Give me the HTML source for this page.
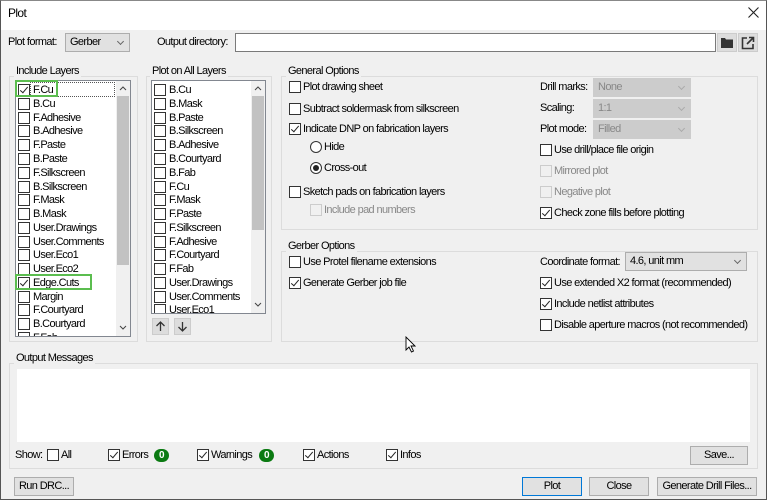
<!DOCTYPE html>
<html><head><meta charset="utf-8"><style>
*{box-sizing:border-box;margin:0;padding:0}
body{width:767px;height:500px;background:#f0f0f0;font-family:"Liberation Sans",sans-serif;font-size:11px;letter-spacing:-0.62px;color:#000;position:relative;overflow:hidden}
.a{position:absolute;white-space:nowrap}
.t{position:absolute;white-space:nowrap;line-height:13px}
.g{position:absolute;border:1px solid #dcdcdc}
.gt{position:absolute;background:#f0f0f0;padding:0 2px;line-height:12px;white-space:nowrap}
.cb{position:absolute;width:12px;height:12px;border:1px solid #333;background:#fff}
.cb.d{border-color:#ccc;background:#f0f0f0}
.ck::after{content:"";position:absolute;left:3px;top:0px;width:3px;height:7px;border:solid #222;border-width:0 1.3px 1.3px 0;transform:rotate(40deg)}
.rb{position:absolute;width:12px;height:12px;border:1px solid #333;border-radius:50%;background:#fff}
.rb.on::after{content:"";position:absolute;left:2px;top:2px;width:6px;height:6px;border-radius:50%;background:#222}
.cmb{position:absolute;height:19px;border:1px solid #adadad;background:#e1e1e1;line-height:17px;padding-left:4px}
.cmb.dis{background:#ccc;border-color:#ccc;color:#888}
.cmb::after{content:"";position:absolute;right:6px;top:5px;width:4px;height:4px;border:solid #666;border-width:0 1px 1px 0;transform:rotate(45deg)}
.cmb.dis::after{border-color:#aaa}
.btn{position:absolute;height:19px;border:1px solid #adadad;background:#e1e1e1;text-align:center;line-height:17px}
.list{position:absolute;background:#fff;border:1px solid #828790;overflow:hidden}
.li{position:absolute;left:2px;height:14px;line-height:14px}
.li .cb{left:0;top:1px}
.li span{position:absolute;left:15px;top:0}
.sb{position:absolute;width:14px;background:#f0f0f0}
.th{position:absolute;left:1px;width:12px;background:#c2c2c2}
.badge{position:absolute;width:15px;height:13px;border-radius:7px;background:#0b7a12;color:#fff;font-weight:bold;text-align:center;line-height:13px;font-size:10px}
</style></head><body>
<div class="a" style="left:0;top:0;width:767px;height:30px;background:#fff"></div>
<div class="a" style="left:8px;top:6px;font-size:12px">Plot</div>
<svg class="a" style="left:748px;top:7px" width="11" height="11"><path d="M0.5 0.5L10.5 10.5M10.5 0.5L0.5 10.5" stroke="#222" stroke-width="1.1"/></svg>
<div class="a" style="left:0;top:0;width:767px;height:500px;border:1px solid #555;border-top-color:#888"></div>

<div class="t" style="left:8px;top:36px">Plot format:</div>
<div class="cmb" style="left:65px;top:33px;width:65px">Gerber</div>
<div class="t" style="left:157px;top:36px">Output directory:</div>
<div class="a" style="left:235px;top:33px;width:481px;height:19px;background:#fff;border:1px solid #7a7a7a"></div>
<div class="a" style="left:717px;top:33px;width:20px;height:19px;background:#ddd;border:1px solid #ccc"></div>
<svg class="a" style="left:721px;top:37px" width="12" height="11"><path d="M0 1h4l1 1.5h7V11H0z" fill="#333"/></svg>
<div class="a" style="left:738px;top:33px;width:20px;height:19px;background:#ddd;border:1px solid #ccc"></div>
<svg class="a" style="left:741px;top:36px" width="14" height="14"><path d="M6 2H1.5v10.5H12V8" fill="none" stroke="#333" stroke-width="1.6"/><path d="M8 1.5h4.5V6M12.5 1.5L6 8" fill="none" stroke="#333" stroke-width="1.6"/></svg>

<!-- Include Layers -->
<div class="g" style="left:9px;top:76px;width:129px;height:266px"></div>
<div class="gt" style="left:14px;top:65px">Include Layers</div>
<div class="list" style="left:15px;top:80px;width:116px;height:257px">
<div class="sb" style="left:100px;top:0;height:255px"><svg class="a" style="left:3px;top:4px" width="8" height="6"><path d="M1 5L4 2L7 5" fill="none" stroke="#444"/></svg><div class="th" style="top:15px;height:169px"></div><svg class="a" style="left:3px;top:244px" width="8" height="6"><path d="M1 1L4 4L7 1" fill="none" stroke="#444"/></svg></div>
<div class="li" style="top:2px"><div class="cb ck"></div><span>F.Cu</span></div>
<div class="a" style="left:14px;top:1px;width:85px;height:15px;border:1px dotted #555"></div>
<div class="li" style="top:16px"><div class="cb"></div><span>B.Cu</span></div>
<div class="li" style="top:30px"><div class="cb"></div><span>F.Adhesive</span></div>
<div class="li" style="top:43px"><div class="cb"></div><span>B.Adhesive</span></div>
<div class="li" style="top:57px"><div class="cb"></div><span>F.Paste</span></div>
<div class="li" style="top:71px"><div class="cb"></div><span>B.Paste</span></div>
<div class="li" style="top:85px"><div class="cb"></div><span>F.Silkscreen</span></div>
<div class="li" style="top:99px"><div class="cb"></div><span>B.Silkscreen</span></div>
<div class="li" style="top:112px"><div class="cb"></div><span>F.Mask</span></div>
<div class="li" style="top:126px"><div class="cb"></div><span>B.Mask</span></div>
<div class="li" style="top:140px"><div class="cb"></div><span>User.Drawings</span></div>
<div class="li" style="top:154px"><div class="cb"></div><span>User.Comments</span></div>
<div class="li" style="top:167px"><div class="cb"></div><span>User.Eco1</span></div>
<div class="li" style="top:181px"><div class="cb"></div><span>User.Eco2</span></div>
<div class="li" style="top:195px"><div class="cb ck"></div><span>Edge.Cuts</span></div>
<div class="li" style="top:209px"><div class="cb"></div><span>Margin</span></div>
<div class="li" style="top:222px"><div class="cb"></div><span>F.Courtyard</span></div>
<div class="li" style="top:236px"><div class="cb"></div><span>B.Courtyard</span></div>
<div class="li" style="top:250px"><div class="cb"></div><span>F.Fab</span></div>
</div>
<div class="a" style="left:15px;top:80px;width:43px;height:17px;border:2px solid #5bbd4f"></div>
<div class="a" style="left:15px;top:274px;width:77px;height:16px;border:2px solid #5bbd4f"></div>

<!-- Plot on All Layers -->
<div class="g" style="left:146px;top:76px;width:126px;height:266px"></div>
<div class="gt" style="left:150px;top:65px">Plot on All Layers</div>
<div class="list" style="left:151px;top:80px;width:115px;height:234px">
<div class="sb" style="left:99px;top:0;height:232px"><svg class="a" style="left:3px;top:4px" width="8" height="6"><path d="M1 5L4 2L7 5" fill="none" stroke="#444"/></svg><div class="th" style="top:15px;height:134px"></div><svg class="a" style="left:3px;top:221px" width="8" height="6"><path d="M1 1L4 4L7 1" fill="none" stroke="#444"/></svg></div>
<div class="li" style="top:2px"><div class="cb"></div><span>B.Cu</span></div>
<div class="li" style="top:16px"><div class="cb"></div><span>B.Mask</span></div>
<div class="li" style="top:30px"><div class="cb"></div><span>B.Paste</span></div>
<div class="li" style="top:43px"><div class="cb"></div><span>B.Silkscreen</span></div>
<div class="li" style="top:57px"><div class="cb"></div><span>B.Adhesive</span></div>
<div class="li" style="top:71px"><div class="cb"></div><span>B.Courtyard</span></div>
<div class="li" style="top:85px"><div class="cb"></div><span>B.Fab</span></div>
<div class="li" style="top:99px"><div class="cb"></div><span>F.Cu</span></div>
<div class="li" style="top:112px"><div class="cb"></div><span>F.Mask</span></div>
<div class="li" style="top:126px"><div class="cb"></div><span>F.Paste</span></div>
<div class="li" style="top:140px"><div class="cb"></div><span>F.Silkscreen</span></div>
<div class="li" style="top:154px"><div class="cb"></div><span>F.Adhesive</span></div>
<div class="li" style="top:167px"><div class="cb"></div><span>F.Courtyard</span></div>
<div class="li" style="top:181px"><div class="cb"></div><span>F.Fab</span></div>
<div class="li" style="top:195px"><div class="cb"></div><span>User.Drawings</span></div>
<div class="li" style="top:209px"><div class="cb"></div><span>User.Comments</span></div>
<div class="li" style="top:222px"><div class="cb"></div><span>User.Eco1</span></div>
</div>
<div class="a" style="left:152px;top:318px;width:17px;height:17px;background:#ddd;border:1px solid #ccc"></div>
<svg class="a" style="left:155px;top:321px" width="11" height="11"><path d="M5.5 10V1M1.5 5L5.5 1L9.5 5" fill="none" stroke="#333" stroke-width="1.3"/></svg>
<div class="a" style="left:174px;top:318px;width:17px;height:17px;background:#ddd;border:1px solid #ccc"></div>
<svg class="a" style="left:177px;top:321px" width="11" height="11"><path d="M5.5 1V10M1.5 6L5.5 10L9.5 6" fill="none" stroke="#333" stroke-width="1.3"/></svg>

<!-- General Options -->
<div class="g" style="left:281px;top:76px;width:477px;height:154px"></div>
<div class="gt" style="left:286px;top:65px">General Options</div>
<div class="cb" style="left:289px;top:81px"></div><div class="t" style="left:303px;top:81px">Plot drawing sheet</div>
<div class="cb" style="left:289px;top:103px"></div><div class="t" style="left:303px;top:103px">Subtract soldermask from silkscreen</div>
<div class="cb ck" style="left:289px;top:123px"></div><div class="t" style="left:303px;top:123px">Indicate DNP on fabrication layers</div>
<div class="rb" style="left:310px;top:141px"></div><div class="t" style="left:324px;top:141px">Hide</div>
<div class="rb on" style="left:310px;top:162px"></div><div class="t" style="left:324px;top:162px">Cross-out</div>
<div class="cb" style="left:289px;top:186px"></div><div class="t" style="left:303px;top:186px">Sketch pads on fabrication layers</div>
<div class="cb d" style="left:310px;top:204px"></div><div class="t" style="left:324px;top:204px;color:#888">Include pad numbers</div>
<div class="t" style="left:540px;top:81px">Drill marks:</div><div class="cmb dis" style="left:593px;top:78px;width:98px">None</div>
<div class="t" style="left:540px;top:102px">Scaling:</div><div class="cmb dis" style="left:593px;top:99px;width:98px">1:1</div>
<div class="t" style="left:540px;top:123px">Plot mode:</div><div class="cmb dis" style="left:593px;top:120px;width:98px">Filled</div>
<div class="cb" style="left:540px;top:144px"></div><div class="t" style="left:554px;top:144px">Use drill/place file origin</div>
<div class="cb d" style="left:540px;top:165px"></div><div class="t" style="left:554px;top:165px;color:#888">Mirrored plot</div>
<div class="cb d" style="left:540px;top:186px"></div><div class="t" style="left:554px;top:186px;color:#888">Negative plot</div>
<div class="cb ck" style="left:540px;top:207px"></div><div class="t" style="left:554px;top:207px">Check zone fills before plotting</div>

<!-- Gerber Options -->
<div class="g" style="left:281px;top:251px;width:477px;height:91px"></div>
<div class="gt" style="left:286px;top:240px">Gerber Options</div>
<div class="cb" style="left:289px;top:256px"></div><div class="t" style="left:303px;top:256px">Use Protel filename extensions</div>
<div class="cb ck" style="left:289px;top:277px"></div><div class="t" style="left:303px;top:277px">Generate Gerber job file</div>
<div class="t" style="left:540px;top:256px">Coordinate format:</div><div class="cmb" style="left:625px;top:252px;width:122px">4.6, unit mm</div>
<div class="cb ck" style="left:540px;top:277px"></div><div class="t" style="left:554px;top:277px">Use extended X2 format (recommended)</div>
<div class="cb ck" style="left:540px;top:298px"></div><div class="t" style="left:554px;top:298px">Include netlist attributes</div>
<div class="cb" style="left:540px;top:319px"></div><div class="t" style="left:554px;top:319px">Disable aperture macros (not recommended)</div>
<svg class="a" style="left:405px;top:336px" width="11" height="17"><path d="M1 1V14L4 11L6.5 16L8.5 15L6 10H10Z" fill="#fff" stroke="#000" stroke-width="0.9"/></svg>

<!-- Output Messages -->
<div class="g" style="left:9px;top:363px;width:749px;height:106px"></div>
<div class="gt" style="left:14px;top:352px">Output Messages</div>
<div class="a" style="left:17px;top:369px;width:733px;height:73px;background:#fff"></div>
<div class="t" style="left:15px;top:449px">Show:</div>
<div class="cb" style="left:47px;top:449px"></div><div class="t" style="left:61px;top:449px">All</div>
<div class="cb ck" style="left:108px;top:449px"></div><div class="t" style="left:122px;top:449px">Errors</div><div class="badge" style="left:154px;top:449px">0</div>
<div class="cb ck" style="left:197px;top:449px"></div><div class="t" style="left:211px;top:449px">Warnings</div><div class="badge" style="left:259px;top:449px">0</div>
<div class="cb ck" style="left:303px;top:449px"></div><div class="t" style="left:317px;top:449px">Actions</div>
<div class="cb ck" style="left:386px;top:449px"></div><div class="t" style="left:400px;top:449px">Infos</div>
<div class="btn" style="left:690px;top:446px;width:58px">Save...</div>

<div class="btn" style="left:14px;top:477px;width:60px">Run DRC...</div>
<div class="btn" style="left:522px;top:477px;width:60px;border:1px solid #0078d7">Plot</div>
<div class="btn" style="left:589px;top:477px;width:60px">Close</div>
<div class="btn" style="left:657px;top:477px;width:100px">Generate Drill Files...</div>
</body></html>
